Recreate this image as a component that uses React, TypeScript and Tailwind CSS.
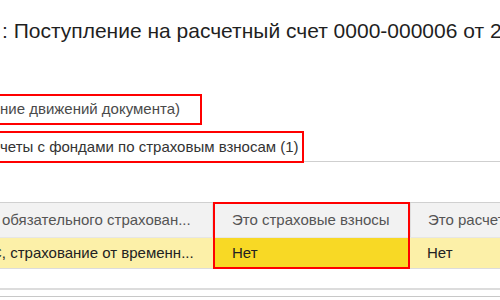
const cols = "grid grid-cols-[213px_197px_1fr]";

export default function App() {
  return (
    <div className="relative w-[500px] h-[300px] overflow-hidden bg-white font-['Liberation_Sans',Arial,sans-serif]">
      {/* document title */}
      <div className="pt-[18px] pl-[2px] h-[94px] whitespace-nowrap text-[21px] leading-[25px] text-[#1f1f1f]">
        : Поступление на расчетный счет 0000-000006 от 2
      </div>

      {/* highlighted links */}
      <div className="w-[202px] h-[31px] border-2 border-l-0 border-[#f00] flex items-center whitespace-nowrap text-[15px] text-[#4a4a4a]">
        ние движений документа)
      </div>
      <div className="mt-[6px] flex items-end">
        <div className="w-[304px] h-[32px] shrink-0 border-2 border-l-0 border-[#f00] flex items-center whitespace-nowrap text-[15px] text-[#333]">
          четы с фондами по страховым взносам (1)
        </div>
        <div className="flex-1 h-px mb-[1px] bg-[#cfcfcf]" />
      </div>

      {/* table */}
      <div className="relative mt-[39px] whitespace-nowrap text-[15px]">
        <div className={`${cols} h-[35px] bg-[#f2f2f2] border-t border-[#d0d0d0] text-[#555] items-center`}>
          <div className="pl-[2px] border-r border-[#e0e0e0] h-full flex items-center">
            обязательного страхован...
          </div>
          <div className="pl-[19px]">Это страховые взносы</div>
          <div className="pl-[17px] border-l border-[#e0e0e0] h-full flex items-center">Это расчеты</div>
        </div>
        <div className={`${cols} h-[32px] bg-[#fcf0a8] border-t border-[#e6e6e6] border-b border-b-[#dcdcdc] text-[#222] items-center`}>
          <div className="h-full flex items-center overflow-hidden">
            <span className="-ml-[9px]">С, страхование от временн...</span>
          </div>
          <div className="h-full bg-[#f8d925] pl-[19px] flex items-center">Нет</div>
          <div className="pl-[17px]">Нет</div>
        </div>
        <div className="absolute left-[213px] top-0 w-[197px] h-[67px] border-2 border-[#f00]" />
      </div>

      {/* footer lines */}
      <div className="mt-[19px] h-[2px] bg-[#dcdcdc]" />
      <div className="mt-[6px] h-px bg-[#c8c8c8]" />
    </div>
  );
}
